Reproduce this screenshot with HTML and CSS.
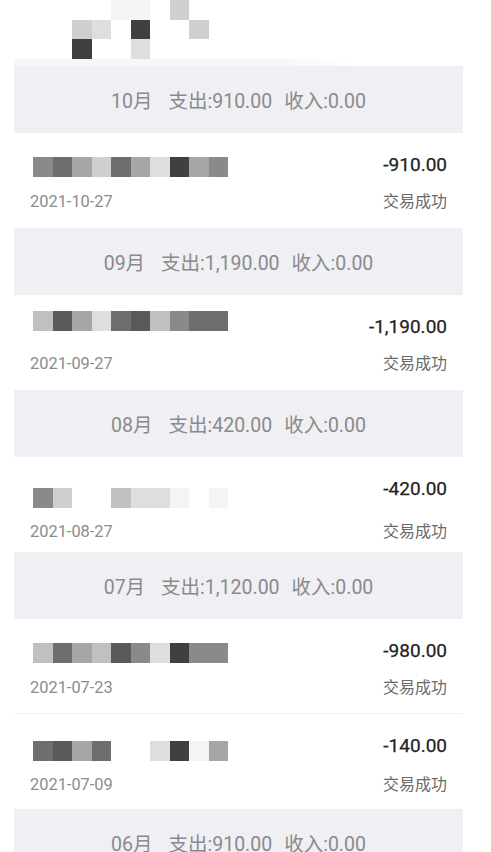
FILE: index.html
```html
<!DOCTYPE html>
<html lang="zh-CN">
<head>
  <meta charset="UTF-8" />
  <meta name="viewport" content="width=device-width, initial-scale=1.0" />
  <title>账单</title>
  <link rel="stylesheet" href="styles.css">
</head>
<body>
  <div class="bill">
    <div class="top">
      <div class="mosaic top-grid">
        <span></span><span></span><span class="s9"></span><span class="s9"></span><span></span><span class="s7"></span><span></span>
        <span class="s7"></span><span class="s8"></span><span></span><span class="s1"></span><span></span><span></span><span class="s7"></span>
        <span class="s1"></span><span></span><span></span><span class="s8"></span><span></span><span></span><span></span>
      </div>
    </div>

    <div class="month">10月<i class="sp-lg"></i>支出:910.00<i class="sp"></i>收入:0.00</div>
    <div class="item">
      <div class="row">
        <div class="mosaic line"><span class="s4"></span><span class="s3"></span><span class="s5"></span><span class="s7"></span><span class="s3"></span><span class="s5"></span><span class="s8"></span><span class="s1"></span><span class="s5"></span><span class="s4"></span></div>
        <div class="amount">-910.00</div>
      </div>
      <div class="row">
        <div class="date">2021-10-27</div>
        <div class="status">交易成功</div>
      </div>
    </div>

    <div class="month">09月<i class="sp-lg"></i>支出:1,190.00<i class="sp"></i>收入:0.00</div>
    <div class="item">
      <div class="row">
        <div class="mosaic line hi"><span class="s6"></span><span class="s2"></span><span class="s5"></span><span class="s8"></span><span class="s3"></span><span class="s2"></span><span class="s6"></span><span class="s4"></span><span class="s3"></span><span class="s3"></span></div>
        <div class="amount">-1,190.00</div>
      </div>
      <div class="row">
        <div class="date">2021-09-27</div>
        <div class="status">交易成功</div>
      </div>
    </div>

    <div class="month">08月<i class="sp-lg"></i>支出:420.00<i class="sp"></i>收入:0.00</div>
    <div class="item">
      <div class="row">
        <div class="mosaic line lo"><span class="s4"></span><span class="s7"></span><span></span><span></span><span class="s6"></span><span class="s8"></span><span class="s8"></span><span class="s9"></span><span></span><span class="s9"></span></div>
        <div class="amount">-420.00</div>
      </div>
      <div class="row">
        <div class="date">2021-08-27</div>
        <div class="status">交易成功</div>
      </div>
    </div>

    <div class="month">07月<i class="sp-lg"></i>支出:1,120.00<i class="sp"></i>收入:0.00</div>
    <div class="item">
      <div class="row">
        <div class="mosaic line"><span class="s6"></span><span class="s3"></span><span class="s5"></span><span class="s6"></span><span class="s2"></span><span class="s4"></span><span class="s8"></span><span class="s1"></span><span class="s4"></span><span class="s4"></span></div>
        <div class="amount">-980.00</div>
      </div>
      <div class="row">
        <div class="date">2021-07-23</div>
        <div class="status">交易成功</div>
      </div>
    </div>
    <div class="item">
      <div class="row">
        <div class="mosaic line lo-sm"><span class="s3"></span><span class="s2"></span><span class="s5"></span><span class="s3"></span><span></span><span></span><span class="s8"></span><span class="s1"></span><span class="s9"></span><span class="s5"></span></div>
        <div class="amount">-140.00</div>
      </div>
      <div class="row">
        <div class="date">2021-07-09</div>
        <div class="status">交易成功</div>
      </div>
    </div>

    <div class="month">06月<i class="sp-lg"></i>支出:910.00<i class="sp"></i>收入:0.00</div>
  </div>
</body>
</html>
```

FILE: styles.css
```css
body {
  margin: 0;
  background: #fff;
  font-family: Roboto, "Noto Sans CJK SC", sans-serif;
  overflow: hidden;
}
.bill {
  width: 449px;
  margin-left: 14px;
}
.top {
  height: 66px;
  background:
    linear-gradient(to right, #f7f7f9 60%, #fff 75%) 0 59px / 100% 7px no-repeat,
    #fff;
}
.mosaic {
  display: grid;
  grid-auto-columns: 19.5px;
  grid-auto-rows: 19.5px;
}
.mosaic span {
  display: block;
}
.top-grid {
  grid-template-columns: repeat(7, 19.5px);
  padding-left: 58px;
}
.line {
  grid-auto-flow: column;
  margin-left: 3px;
  margin-top: 5px;
}
.line.hi { margin-top: -3px; }
.line.lo { margin-top: 12px; }
.line.lo-sm { margin-top: 8px; }
.s1 { background: #404040; }
.s2 { background: #5a5a5a; }
.s3 { background: #6e6e6e; }
.s4 { background: #8a8a8a; }
.s5 { background: #a6a6a6; }
.s6 { background: #c0c0c0; }
.s7 { background: #cfcfcf; }
.s8 { background: #dedede; }
.s9 { background: #f4f4f4; }

.month {
  height: 67px;
  background: #efeff4;
  color: #8a8a8a;
  font-size: 19.5px;
  display: flex;
  align-items: center;
  justify-content: center;
}
.month i {
  display: inline-block;
}
.sp-lg { width: 16px; }
.sp { width: 12px; }

.item {
  height: 95px;
  box-sizing: border-box;
  padding: 19px 16px 0 16px;
  border-bottom: 1px solid #f0f0f0;
}
.item:has(+ .month) {
  border-bottom: none;
}
.row {
  display: flex;
  justify-content: space-between;
  align-items: flex-start;
}
.row + .row {
  margin-top: 13px;
}
.amount {
  height: 26px;
  line-height: 26px;
  font-size: 19px;
  color: #222;
  -webkit-text-stroke: 0.25px #222;
}
.date,
.status {
  line-height: 22px;
  font-size: 16px;
}
.date {
  font-size: 16.4px;
  color: #8c8c8c;
}
.status {
  color: #6a6a6a;
}
```
